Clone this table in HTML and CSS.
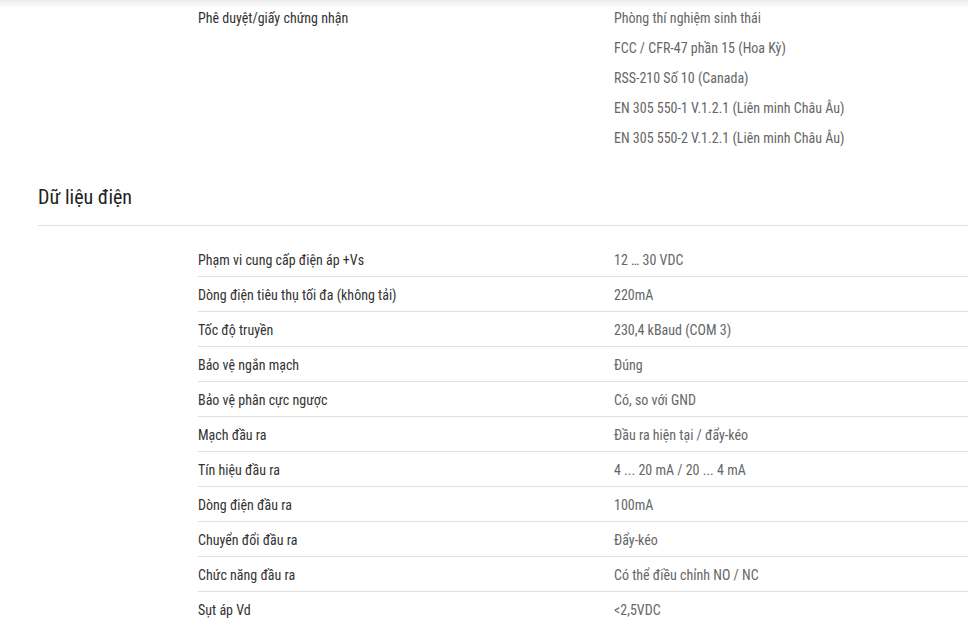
FILE: index.html
```html
<!DOCTYPE html>
<html lang="vi">
<head>
<meta charset="utf-8">
<title>Thông số kỹ thuật</title>
<link rel="stylesheet" href="styles.css">
</head>
<body>
<div class="topshadow"></div>
<main class="page">
  <div class="cert">
    <div class="cert-label">Phê duyệt/giấy chứng nhận</div>
    <ul class="cert-values">
      <li>Phòng thí nghiệm sinh thái</li>
      <li>FCC / CFR-47 phần 15 (Hoa Kỳ)</li>
      <li>RSS-210 Số 10 (Canada)</li>
      <li>EN 305 550-1 V.1.2.1 (Liên minh Châu Âu)</li>
      <li>EN 305 550-2 V.1.2.1 (Liên minh Châu Âu)</li>
    </ul>
  </div>

  <h2 class="section-title">Dữ liệu điện</h2>

  <div class="specs">
    <div class="row"><div class="k">Phạm vi cung cấp điện áp +Vs</div><div class="v">12 … 30 VDC</div></div>
    <div class="row"><div class="k">Dòng điện tiêu thụ tối đa (không tải)</div><div class="v">220mA</div></div>
    <div class="row"><div class="k">Tốc độ truyền</div><div class="v">230,4 kBaud (COM 3)</div></div>
    <div class="row"><div class="k">Bảo vệ ngắn mạch</div><div class="v">Đúng</div></div>
    <div class="row"><div class="k">Bảo vệ phân cực ngược</div><div class="v">Có, so với GND</div></div>
    <div class="row"><div class="k">Mạch đầu ra</div><div class="v">Đầu ra hiện tại / đẩy-kéo</div></div>
    <div class="row"><div class="k">Tín hiệu đầu ra</div><div class="v">4 ... 20 mA / 20 ... 4 mA</div></div>
    <div class="row"><div class="k">Dòng điện đầu ra</div><div class="v">100mA</div></div>
    <div class="row"><div class="k">Chuyển đổi đầu ra</div><div class="v">Đẩy-kéo</div></div>
    <div class="row"><div class="k">Chức năng đầu ra</div><div class="v">Có thể điều chỉnh NO / NC</div></div>
    <div class="row"><div class="k">Sụt áp Vd</div><div class="v">&lt;2,5VDC</div></div>
  </div>
</main>
</body>
</html>
```

FILE: styles.css
```css
html, body {
  margin: 0;
  padding: 0;
  background: #fff;
}
body {
  font-family: Roboto, "Liberation Sans", sans-serif;
  font-stretch: 87.5%;
  font-size: 14px;
  color: #333;
  overflow: hidden;
}
.topshadow {
  position: fixed;
  top: 0;
  left: 0;
  right: 0;
  height: 8px;
  background: linear-gradient(#ececec, rgba(255,255,255,0));
}
.page {
  padding-left: 38px;
}
.cert {
  display: flex;
  padding-left: 160px;
  padding-top: 3px;
}
.cert-label {
  width: 416px;
  line-height: 30px;
  color: #333;
}
.cert-values {
  list-style: none;
  margin: 0;
  padding: 0;
  line-height: 30px;
  color: #666;
}
.section-title {
  margin: 30px 0 0;
  font-size: 20px;
  font-weight: 400;
  line-height: 28px;
  color: #222;
  padding-bottom: 14px;
  border-bottom: 1px solid #e0e0e0;
}
.specs {
  margin-top: 16px;
  margin-left: 160px;
}
.row {
  display: flex;
  height: 32px;
  padding-top: 2px;
  align-items: center;
  border-bottom: 1px solid #e0e0e0;
}
.row:last-child {
  border-bottom: none;
}
.k {
  width: 416px;
  color: #333;
}
.v {
  color: #666;
}
```
